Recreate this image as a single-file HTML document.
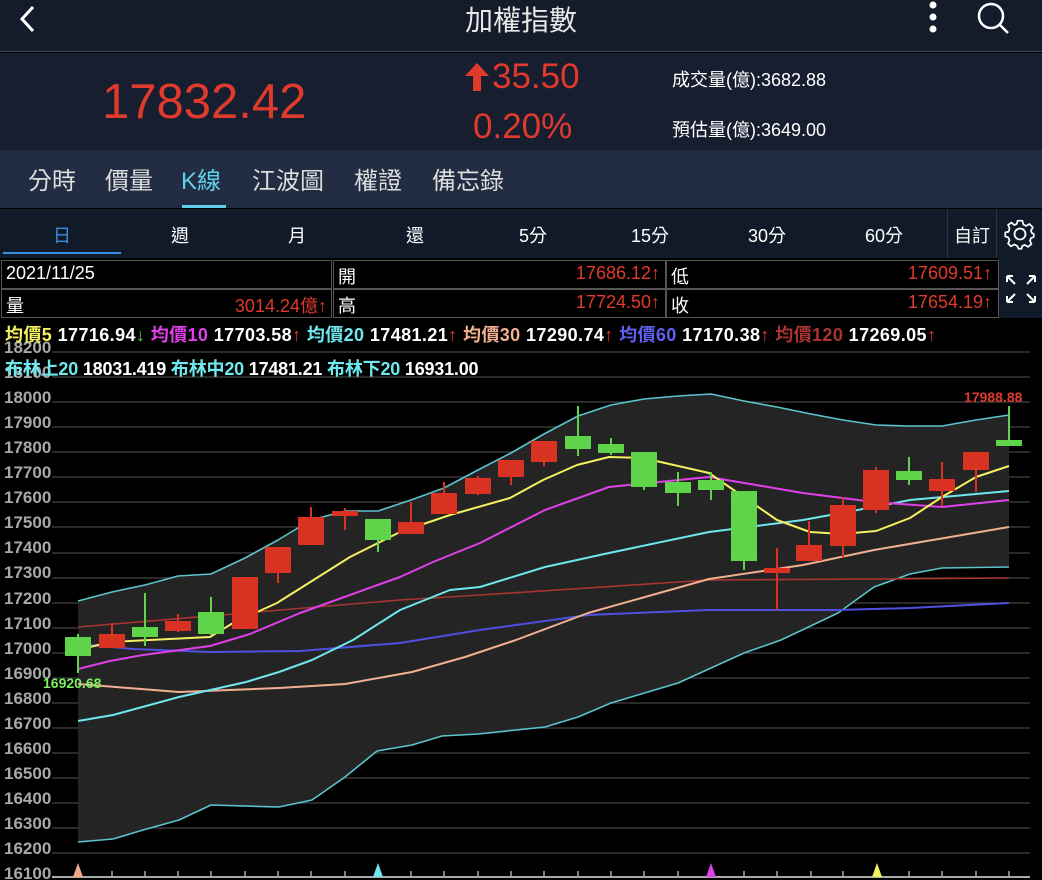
<!DOCTYPE html>
<html><head><meta charset="utf-8"><style>
*{margin:0;padding:0;box-sizing:border-box}
body{width:1042px;height:880px;background:#000;overflow:hidden;position:relative;font-family:"Liberation Sans","Noto Sans CJK TC",sans-serif;color:#fff}
.a{position:absolute;white-space:nowrap}
.r{color:#e03a2c}
</style></head><body>
<div class="a" style="left:0;top:0;width:1042px;height:52px;background:#141b2b;border-bottom:1px solid #3a4458"></div>
<div class="a" style="left:0;top:53px;width:1042px;height:97px;background:#161e2f"></div>
<div class="a" style="left:0;top:150px;width:1042px;height:58px;background:#222c42"></div>
<svg class="a" style="left:14px;top:4px" width="24" height="30"><path d="M19 3 L8 15 L19 27" stroke="#fff" stroke-width="3" fill="none"/></svg>
<div class="a" style="left:0;width:1042px;top:-1px;text-align:center;font-size:28px;color:#e8e8e8">加權指數</div>
<svg class="a" style="left:920px;top:0" width="120" height="38"><circle cx="13" cy="5" r="3.5" fill="#fff"/><circle cx="13" cy="17" r="3.5" fill="#fff"/><circle cx="13" cy="29" r="3.5" fill="#fff"/><circle cx="71" cy="16" r="12" stroke="#fff" stroke-width="2.5" fill="none"/><path d="M80 25 L88 33" stroke="#fff" stroke-width="2.5"/></svg>
<div class="a r" style="left:102px;top:74px;font-size:49px">17832.42</div>
<svg class="a" style="left:464px;top:63px" width="26" height="30"><path d="M13 0 L25 13 L17 13 L17 28 L9 28 L9 13 L1 13Z" fill="#e03a2c"/></svg>
<div class="a r" style="left:492px;top:57px;font-size:35px">35.50</div>
<div class="a r" style="left:473px;top:107px;font-size:35px">0.20%</div>
<div class="a" style="left:672px;top:66px;font-size:18px">成交量(億):3682.88</div>
<div class="a" style="left:672px;top:116px;font-size:18px">預估量(億):3649.00</div>
<div class="a" style="left:28px;top:161px;font-size:24px;color:#ddd">分時</div>
<div class="a" style="left:105px;top:161px;font-size:24px;color:#ddd">價量</div>
<div class="a" style="left:181px;top:161px;font-size:24px;color:#5fd0e8">K線</div>
<div class="a" style="left:182px;top:205px;width:44px;height:3px;background:#5fd0e8"></div>
<div class="a" style="left:252px;top:161px;font-size:24px;color:#ddd">江波圖</div>
<div class="a" style="left:354px;top:161px;font-size:24px;color:#ddd">權證</div>
<div class="a" style="left:432px;top:161px;font-size:24px;color:#ddd">備忘錄</div>
<div class="a" style="left:0;top:209px;width:1042px;height:49px;background:#111a28"></div>
<div class="a" style="left:947px;top:209px;width:1px;height:49px;background:#2c3545"></div>
<div class="a" style="left:996px;top:209px;width:1px;height:49px;background:#2c3545"></div>
<div class="a" style="left:3px;top:252px;width:118px;height:2px;background:#3b8fe0"></div>
<div class="a" style="top:222px;font-size:18px;left:53px;color:#3b8fe0">日</div>
<div class="a" style="top:222px;font-size:18px;left:171px">週</div>
<div class="a" style="top:222px;font-size:18px;left:288px">月</div>
<div class="a" style="top:222px;font-size:18px;left:406px">還</div>
<div class="a" style="top:222px;font-size:18px;left:519px">5分</div>
<div class="a" style="top:222px;font-size:18px;left:631px">15分</div>
<div class="a" style="top:222px;font-size:18px;left:748px">30分</div>
<div class="a" style="top:222px;font-size:18px;left:865px">60分</div>
<div class="a" style="top:222px;font-size:18px;left:954px">自訂</div>
<svg class="a" style="left:1003px;top:217px" width="34" height="34" viewBox="-17 -17 34 34"><path d="M-2.5 -14 L2.5 -14 L3.5 -10 L6.5 -8.5 L10 -10.5 L13.5 -7 L11.5 -3.5 L12.5 -1 L14.5 0 L14.5 3 L11.5 4.5 L10.5 7 L12 10.5 L8.5 13.5 L5 11.5 L2.5 12.5 L1.5 15.5 L-1.5 15.5 L-3 12.5 L-6 11 L-9.5 13 L-12.5 10 L-11 6.5 L-12.5 3.5 L-15.5 2.5 L-15.5 -1.5 L-12 -2.5 L-11 -6 L-12.5 -9.5 L-9 -12 L-6 -9.5 L-3.5 -10.5Z" transform="scale(0.95)" stroke="#fff" stroke-width="1.8" fill="none"/><circle r="5.5" stroke="#fff" stroke-width="1.8" fill="none"/></svg>
<div class="a" style="left:998px;top:258px;width:44px;height:60px;background:#111a28"></div>
<svg class="a" style="left:1004px;top:273px" width="34" height="32" stroke="#fff" stroke-width="2" fill="none"><path d="M3 3 L11 11 M3 3 L3 9 M3 3 L9 3 M31 3 L23 11 M31 3 L31 9 M31 3 L25 3 M3 29 L11 21 M3 29 L3 23 M3 29 L9 29 M31 29 L23 21 M31 29 L31 23 M31 29 L25 29"/></svg>
<div class="a" style="left:1px;top:260px;width:331px;height:29px;border:1px solid #555"></div>
<div class="a" style="left:333px;top:260px;width:333px;height:29px;border:1px solid #555"></div>
<div class="a" style="left:666px;top:260px;width:333px;height:29px;border:1px solid #555"></div>
<div class="a" style="left:1px;top:289px;width:331px;height:29px;border:1px solid #555"></div>
<div class="a" style="left:333px;top:289px;width:333px;height:29px;border:1px solid #555"></div>
<div class="a" style="left:666px;top:289px;width:333px;height:29px;border:1px solid #555"></div>
<div class="a" style="left:6px;top:263px;font-size:18px">2021/11/25</div>
<div class="a" style="left:338px;top:263px;font-size:18px">開</div>
<div class="a r" style="right:382px;top:263px;font-size:18px">17686.12↑</div>
<div class="a" style="left:671px;top:263px;font-size:18px">低</div>
<div class="a r" style="right:50px;top:263px;font-size:18px">17609.51↑</div>
<div class="a" style="left:6px;top:292px;font-size:18px">量</div>
<div class="a r" style="right:715px;top:292px;font-size:18px">3014.24億↑</div>
<div class="a" style="left:338px;top:292px;font-size:18px">高</div>
<div class="a r" style="right:382px;top:292px;font-size:18px">17724.50↑</div>
<div class="a" style="left:671px;top:292px;font-size:18px">收</div>
<div class="a r" style="right:50px;top:292px;font-size:18px">17654.19↑</div>

<svg class="a" style="left:0;top:0" width="1042" height="880">
<g font-family="Liberation Sans" font-weight="bold" font-size="17" fill="#a8a8a8">
<text x="4" y="353">18200</text><text x="4" y="378">18100</text><text x="4" y="403">18000</text><text x="4" y="428">17900</text><text x="4" y="453">17800</text><text x="4" y="478">17700</text><text x="4" y="503">17600</text><text x="4" y="528">17500</text><text x="4" y="553">17400</text><text x="4" y="578">17300</text><text x="4" y="604">17200</text><text x="4" y="629">17100</text><text x="4" y="654">17000</text><text x="4" y="679">16900</text><text x="4" y="704">16800</text><text x="4" y="729">16700</text><text x="4" y="754">16600</text><text x="4" y="779">16500</text><text x="4" y="804">16400</text><text x="4" y="829">16300</text><text x="4" y="854">16200</text><text x="4" y="879">16100</text>
</g>
<g stroke="#444" stroke-width="1.3">
<path d="M52 352H1030M52 377H1030M52 402H1030M52 427H1030M52 452H1030M52 477H1030M52 502H1030M52 527H1030M52 553H1030M52 578H1030M52 603H1030M52 628H1030M52 653H1030M52 678H1030M52 703H1030M52 728H1030M52 753H1030M52 778H1030M52 803H1030M52 828H1030M52 853H1030"/>
</g>
<path d="M52 877H1030" stroke="#aaa" stroke-width="2"/>
<path d="M112 871v6M145 871v6M178 871v6M211 871v6M245 871v6M278 871v6M311 871v6M345 871v6M411 871v6M444 871v6M478 871v6M511 871v6M544 871v6M578 871v6M611 871v6M644 871v6M678 871v6M744 871v6M777 871v6M811 871v6M843 871v6M909 871v6M942 871v6M976 871v6M1009 871v6" stroke="#aaa" stroke-width="1.5"/>
<polygon fill="#262626" fill-opacity="0.95" points="78,601 112,592 145,585 178,576 211,574 245,558 278,540 311,520 345,511 378,511 411,500 444,488 478,470 511,453 544,434 578,416 611,405 644,399 678,396 711,394 744,401 777,407 811,414 843,420 876,425 909,426 942,426 976,420 1009,415 1009,567 942,568 910,574 874,587 838,613 781,640 744,653 678,683 611,703 578,717 545,727 478,734 442,736 412,745 377,751 345,777 312,800 279,807 211,805 179,820 143,830 113,839 78,842"/>
<g fill="none" stroke-width="1.6" stroke-linejoin="round">
<polyline stroke="#5cc4cc" points="78,601 112,592 145,585 178,576 211,574 245,558 278,540 311,520 345,511 378,511 411,500 444,488 478,470 511,453 544,434 578,416 611,405 644,399 678,396 711,394 744,401 777,407 811,414 843,420 876,425 909,426 942,426 976,420 1009,415"/>
<polyline stroke="#5cc4cc" points="78,842 113,839 143,830 179,820 211,805 279,807 312,800 345,777 377,751 412,745 442,736 478,734 545,727 578,717 611,703 678,683 744,653 781,640 838,613 874,587 910,574 942,568 1009,567"/>
<polyline stroke="#a83530" points="78,627 400,600 480,595 709,580 874,579 1009,578"/>
<polyline stroke="#5050e0" stroke-width="2" points="78,644 133,649 210,652 300,651 400,643 480,630 588,615 709,610 838,610 910,608 1009,603"/>
<polyline stroke="#f0b090" stroke-width="2" points="78,684 179,692 279,688 345,684 412,672 465,657 516,640 588,613 709,579 803,565 874,550 1009,527"/>
<polyline stroke="#6ee8ee" stroke-width="2" points="78,721 113,715 179,697 246,682 279,672 312,660 353,640 400,610 450,590 480,587 545,567 609,553 709,532 803,520 874,507 910,500 1009,491"/>
<polyline stroke="#e040e8" stroke-width="2" points="78,669 110,661 143,655 210,646 250,634 300,613 400,577 433,562 480,543 545,510 609,487 709,477 803,493 874,502 942,507 1009,500"/>
<polyline stroke="#f5f060" stroke-width="2" points="78,650 110,642 210,637 233,623 277,603 350,557 400,532 450,515 510,498 543,480 577,465 609,457 643,458 709,473 777,520 810,532 842,534 876,531 910,518 942,497 976,477 1009,466"/>
</g>
<g stroke-width="2">
<g stroke="#5fd34a" fill="#5fd34a">
<path d="M78 634V673M145 593V646M211 597V635M378 520V552M578 406V456M611 438V455M644 453V490M678 472V506M711 472V500M744 492V570M909 457V485M1009 406V445"/>
<rect x="66" y="638" width="24" height="17"/><rect x="133" y="628" width="24" height="8"/><rect x="199" y="613" width="24" height="20"/><rect x="366" y="520" width="24" height="19"/><rect x="566" y="437" width="24" height="11"/><rect x="599" y="445" width="24" height="7"/><rect x="632" y="453" width="24" height="33"/><rect x="666" y="483" width="24" height="9"/><rect x="699" y="481" width="24" height="8"/><rect x="732" y="492" width="24" height="68"/><rect x="897" y="472" width="24" height="7"/><rect x="997" y="441" width="24" height="4"/>
</g>
<g stroke="#d93222" fill="#d93222">
<path d="M112 623V647M178 614V632M278 548V583M311 507V544M345 508V530M411 502V533M444 482V513M478 476V495M511 461V485M544 442V466M777 548V610M809 521V560M843 497V558M876 467V513M942 462V506M976 453V492"/>
<rect x="100" y="635" width="24" height="12"/><rect x="166" y="622" width="24" height="8"/><rect x="233" y="578" width="24" height="50"/><rect x="266" y="548" width="24" height="24"/><rect x="299" y="518" width="24" height="26"/><rect x="333" y="512" width="24" height="3"/><rect x="399" y="523" width="24" height="10"/><rect x="432" y="494" width="24" height="19"/><rect x="466" y="479" width="24" height="14"/><rect x="499" y="461" width="24" height="15"/><rect x="532" y="442" width="24" height="19"/><rect x="765" y="569" width="24" height="3"/><rect x="797" y="546" width="24" height="14"/><rect x="831" y="506" width="24" height="39"/><rect x="864" y="471" width="24" height="38"/><rect x="930" y="480" width="24" height="10"/><rect x="964" y="453" width="24" height="16"/>
</g>
</g>
<text x="43" y="688" font-family="Liberation Sans" font-weight="bold" font-size="14" fill="#7cf060">16920.68</text>
<text x="964" y="402" font-family="Liberation Sans" font-weight="bold" font-size="14" fill="#e03a2c">17988.88</text>
<polygon points="78,863 73,877 83,877" fill="#f0a888"/>
<polygon points="378,863 373,877 383,877" fill="#6ee8ee"/>
<polygon points="711,863 706,877 716,877" fill="#e040e8"/>
<polygon points="877,863 872,877 882,877" fill="#f5f060"/>
</svg>
<div class="a" style="left:5px;top:321px;font-size:18px;letter-spacing:0.4px;font-weight:bold"><span style="color:#f5f060">均價5</span> 17716.94<span style="color:#5fd34a">↓</span> <span style="color:#e040e8">均價10</span> 17703.58<span class="r">↑</span> <span style="color:#6ee8ee">均價20</span> 17481.21<span class="r">↑</span> <span style="color:#f0b090">均價30</span> 17290.74<span class="r">↑</span> <span style="color:#6060f0">均價60</span> 17170.38<span class="r">↑</span> <span style="color:#a83530">均價120</span> 17269.05<span class="r">↑</span></div>
<div class="a" style="left:5px;top:355px;font-size:18px;letter-spacing:-0.2px;font-weight:bold"><span style="color:#6ee8ee">布林上20</span> 18031.419 <span style="color:#6ee8ee">布林中20</span> 17481.21 <span style="color:#6ee8ee">布林下20</span> 16931.00</div>
</body></html>
